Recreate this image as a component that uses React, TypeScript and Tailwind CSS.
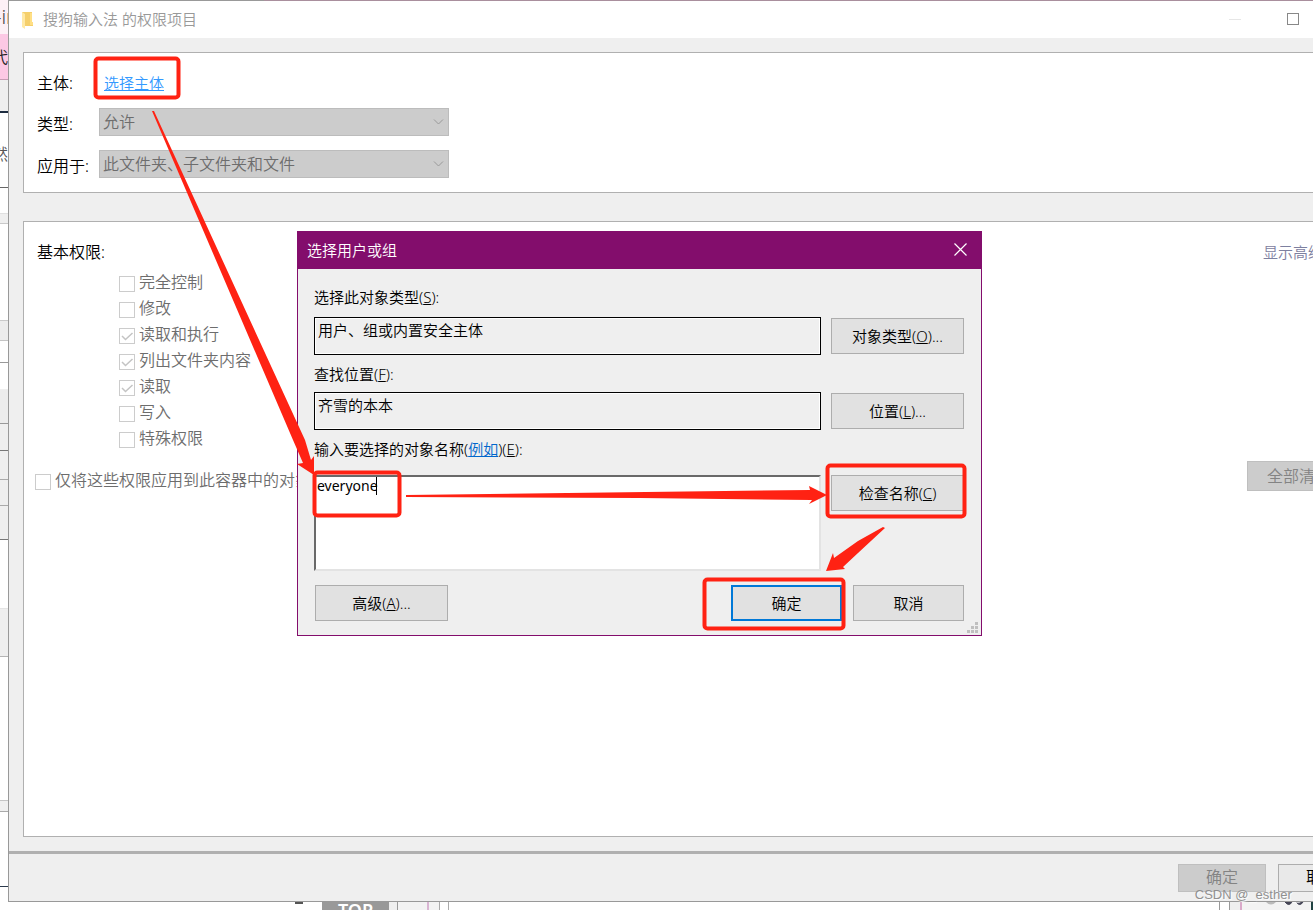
import { ReactNode } from "react";

const basicPermissions = [
  { label: "完全控制", checked: false },
  { label: "修改", checked: false },
  { label: "读取和执行", checked: true },
  { label: "列出文件夹内容", checked: true },
  { label: "读取", checked: true },
  { label: "写入", checked: false },
  { label: "特殊权限", checked: false },
];

// slices of the page that stays visible left of the window
const edgeRows = [
  "h-[26px] bg-white border-[#e0e0e0]",
  "h-[10px] bg-[#efefef] border-[#c9c9c9]",
  "h-[97px] bg-white border-[#c9c9c9]",
  "h-[20px] bg-[#ececec] border-[#c4c4c4]",
  "h-[22px] bg-white border-[#999]",
  "h-[27px] bg-white border-[#efefef]",
  "h-[34px] bg-[#ececec] border-[#999]",
  "h-[27px] bg-[#efefef] border-[#777]",
  "h-[29px] bg-[#efefef] border-[#aaa]",
  "h-[26px] bg-[#efefef] border-[#aaa]",
  "h-[34px] bg-[#efefef] border-[#777]",
  "h-[69px] bg-white border-[#e4e4e4]",
  "h-[48px] bg-[#efefef] border-[#b5b5b5]",
  "h-[144px] bg-white border-[#c4c4c4]",
  "h-[11px] bg-[#efefef] border-[#aaa]",
  "h-[75px] bg-white border-[#2c3a4c]",
];

function BackgroundEdge() {
  return (
    <div className="w-2 shrink-0 overflow-hidden bg-white whitespace-nowrap" aria-hidden="true">
      <div className="flex h-[34px] items-center bg-[#fdf0f6] text-[20px] text-[#444]">
        <span className="-ml-[5px]">-in</span>
      </div>
      <div className="flex h-[46px] items-center border-b border-[#c79cb4] bg-[#fcc8e4] text-base text-[#222]">
        <span className="-ml-2">代</span>
      </div>
      <div className="h-[33px] border-b-2 border-[#1d2c40] bg-[#efefef]" />
      <div className="flex h-[75px] items-center border-b border-[#666] bg-white pt-2 text-base text-[#555]">
        <span className="-ml-2">然</span>
      </div>
      {edgeRows.map((row) => (
        <div key={row} className={`border-b ${row}`} />
      ))}
    </div>
  );
}

function BackgroundFooter() {
  return (
    <div className="flex h-2 shrink-0 justify-between overflow-hidden bg-white" aria-hidden="true">
      <div className="flex">
        <div className="ml-[295px] h-[2px] w-2 bg-[#555]" />
        <div className="ml-[19px] w-[67px] bg-[#999] text-center text-[18px] leading-4 font-semibold text-white">TOP</div>
        <div className="w-[9px] border-r border-[#999] bg-[#efefef]" />
        <div className="w-[31px] border-r-2 border-[#d9b5d3] bg-[#f3f3f3]" />
        <div className="w-[11px] border-r border-[#aaa] bg-[#f3f3f3]" />
        <div className="w-[9px] border-r border-[#aaa]" />
      </div>
      <div className="flex">
        <div className="w-[11px] border-x border-[#999]" />
        <div className="w-[12px] border-r-2 border-[#d9a9c9] bg-[#efefef]" />
        <div className="w-[22px] bg-[#f3f3f3]" />
        <svg className="h-2 w-[49px] bg-[#f3f3f3]" viewBox="0 0 49 8">
          <path d="M2 0h10q-5 5-10 0" fill="#bbb" />
          <path d="M21 0q4 5 7 0M32 0q4 5 7 0" fill="#445" stroke="#445" />
          <path d="M48 0v8" stroke="#244" strokeWidth="2" />
        </svg>
      </div>
    </div>
  );
}

function TitleBar() {
  return (
    <header className="bg-white">
      <div className="flex h-px">
        <div className="w-[255px] bg-[#999]" />
        <div className="flex-1 bg-[#a98f9d]" />
      </div>
      <div className="flex h-[37px] items-center pl-3">
        <svg className="h-[18px] w-[13px]" viewBox="0 0 13 18">
          <path d="M1 1h10v10h1v4H4z" fill="#f5cf6b" />
          <path d="M1 1l3 2v15l-3-2z" fill="#ffe9a6" />
          <path d="M9 2h2v9h1v3H9z" fill="#ffdf85" />
        </svg>
        <h1 className="ml-[9px] flex-1 text-[15px] text-[#999]">搜狗输入法 的权限项目</h1>
        <button type="button" aria-label="最小化" className="mr-[46px] flex h-3 w-3 items-center" disabled>
          <span className="h-px w-full bg-[#e6e6e6]" />
        </button>
        <button type="button" aria-label="最大化" className="mr-[14px] mb-[2px] h-3 w-3 border border-[#888]" />
      </div>
    </header>
  );
}

function DisabledSelect({ id, value }: { id: string; value: string }) {
  return (
    <div className="relative">
      <select
        id={id}
        disabled
        className="block h-7 w-full appearance-none border border-[#bcbcbc] bg-[#ccc] px-[3px] text-base leading-6 text-[#6d6d6d] opacity-100"
      >
        <option>{value}</option>
      </select>
      <svg className="pointer-events-none absolute top-[11px] right-[5px] h-[6px] w-[11px]" viewBox="0 0 11 6" fill="none" stroke="#999">
        <path d="M1 .5l4.500 4.500L10 .5" />
      </svg>
    </div>
  );
}

function Check({ label, checked = false }: { label: string; checked?: boolean }) {
  return (
    <label className="flex h-[26px] items-start gap-1 text-base leading-6 whitespace-nowrap text-[#6d6d6d]">
      <span className="relative mt-[6px] h-4 w-4 shrink-0">
        <input type="checkbox" disabled defaultChecked={checked} className="block h-4 w-4 appearance-none border border-[#ccc] bg-white" />
        {checked && (
          <svg className="absolute inset-0 h-4 w-4" viewBox="0 0 16 16" fill="none" stroke="#c4c4c4" strokeWidth="1.500">
            <path d="M3 8l3.500 3.500L13.500 5" />
          </svg>
        )}
      </span>
      {label}
    </label>
  );
}

function DialogButton({ children, className }: { children: ReactNode; className: string }) {
  return (
    <button type="button" className={`h-9 bg-[#e1e1e1] text-[15px] text-black ${className}`}>
      {children}
    </button>
  );
}

function ReadOnlyField({ id, value }: { id: string; value: string }) {
  return (
    <textarea
      id={id}
      readOnly
      rows={1}
      defaultValue={value}
      className="block h-[38px] min-w-0 flex-1 resize-none overflow-hidden border border-black bg-[#efefef] px-[3px] leading-6 shadow-[inset_0_0_0_1px_white] outline-none"
    />
  );
}

function SelectUsersDialog() {
  return (
    <div
      role="dialog"
      aria-labelledby="dialog-title"
      className="absolute top-[231px] left-[297px] w-[685px] border border-[#830d6c] bg-[#efefef] text-[15px] leading-6 text-black"
    >
      <div className="flex h-[37px] items-center justify-between bg-[#830d6c] pr-[14px] pb-[2px] pl-[9px] text-white">
        <h2 id="dialog-title">选择用户或组</h2>
        <button type="button" aria-label="关闭">
          <svg className="h-[13px] w-[13px]" viewBox="0 0 13 13" stroke="white" strokeWidth="1.200" fill="none">
            <path d="M.5.5l12 12M12.500.5l-12 12" />
          </svg>
        </button>
      </div>
      <form className="relative pt-4 pr-[17px] pb-[14px] pl-4">
        <label htmlFor="object-type" className="block">选择此对象类型(<u>S</u>):</label>
        <div className="mt-2 flex items-center gap-[10px]">
          <ReadOnlyField id="object-type" value="用户、组或内置安全主体" />
          <DialogButton className="w-[133px] border border-[#adadad]">对象类型(<u>O</u>)...</DialogButton>
        </div>
        <label htmlFor="location" className="mt-[7px] block">查找位置(<u>F</u>):</label>
        <div className="mt-[6px] flex items-center gap-[10px]">
          <ReadOnlyField id="location" value="齐雪的本本" />
          <DialogButton className="w-[133px] border border-[#adadad]">位置(<u>L</u>)...</DialogButton>
        </div>
        <div className="mt-[7px]">
          <label htmlFor="object-names">输入要选择的对象名称(</label>
          <a href="#examples" className="text-[#0066cc] underline">例如</a>)(<u>E</u>):
        </div>
        <div className="mt-[14px] flex items-start gap-[10px]">
          <div className="relative min-w-0 flex-1">
            <textarea
              id="object-names"
              defaultValue="everyone"
              className="block h-24 w-full resize-none border-2 border-t-[#696969] border-r-[#e3e3e3] border-b-[#e3e3e3] border-l-[#696969] bg-white px-px text-[14px] leading-[18px] font-normal outline-none"
            />
            <span className="absolute top-[2px] left-[62px] h-[18px] w-px bg-black" />
          </div>
          <DialogButton className="w-[133px] border border-[#adadad]">检查名称(<u>C</u>)</DialogButton>
        </div>
        <div className="mt-[14px] flex gap-[11px] pl-px">
          <DialogButton className="mr-auto w-[133px] border border-[#adadad]">高级(<u>A</u>)...</DialogButton>
          <DialogButton className="w-[111px] border-2 border-[#0078d7]">确定</DialogButton>
          <DialogButton className="w-[111px] border border-[#adadad]">取消</DialogButton>
        </div>
        <svg className="absolute right-[3px] bottom-[2px] h-[11px] w-[11px]" viewBox="0 0 11 11" fill="#bfbfbf">
          <path d="M8 0h3v3H8zM4 4h3v3H4zM8 4h3v3H8zM0 8h3v3H0zM4 8h3v3H4zM8 8h3v3H8z" />
        </svg>
      </form>
    </div>
  );
}

function Annotations() {
  return (
    <svg className="pointer-events-none absolute top-0 left-0 h-[910px] w-[1313px]" viewBox="0 0 1313 910" fill="#ff2213" aria-hidden="true">
      <g fill="none" stroke="#ff2213" strokeWidth="4">
        <rect x="95.500" y="58.500" width="83" height="39" rx="3" />
        <rect x="314.500" y="472.500" width="85" height="43" rx="3" />
        <rect x="827.500" y="465.500" width="137" height="51" rx="3" />
        <rect x="704.500" y="579.500" width="139" height="49" rx="3" />
      </g>
      <path d="M152 111h2L305 440l6 20 3-4v19l-17-11 6-1-10-23z" />
      <path d="M406 495L810 490l-1-4 18 9-18 9 3-4-172-2-234-1z" />
      <path d="M883 527l2 1-27 25-15 14 2 2-19 2 7-18 1 5 24-17z" />
    </svg>
  );
}

export default function App() {
  return (
    <div className="relative flex h-screen flex-col overflow-hidden bg-white font-['Noto_Sans','Noto_Sans_CJK_SC',sans-serif] font-[350]">
      <div className="flex min-h-0 flex-1">
        <BackgroundEdge />
        <main className="flex min-w-0 flex-1 flex-col overflow-hidden border-b border-l border-[#999] bg-[#efefef]">
          <TitleBar />
          <section className="mt-[14px] ml-[14px] border border-r-0 border-[#b0b0b0] bg-white pb-[14px] pl-[13px] text-base leading-6">
            <div className="mt-4 mb-[11px] grid h-7 grid-cols-[62px_350px] items-center">
              <span>主体:</span>
              <a href="#principal" className="justify-self-start pl-[5px] text-[15px] text-[#3399ff]">
                <span className="underline">选择主体</span>
              </a>
            </div>
            <div className="mb-[14px] grid h-7 grid-cols-[62px_350px] items-center">
              <label htmlFor="type" className="pt-1">类型:</label>
              <DisabledSelect id="type" value="允许" />
            </div>
            <div className="grid h-7 grid-cols-[62px_350px] items-center">
              <label htmlFor="applies-to" className="pt-1">应用于:</label>
              <DisabledSelect id="applies-to" value="此文件夹、子文件夹和文件" />
            </div>
          </section>

          <section className="mt-7 mb-[14px] ml-[14px] min-h-0 flex-1 border border-r-0 border-[#b0b0b0] bg-white">
            <div className="flex justify-between pt-[18px] pl-[13px] leading-6">
              <h2 className="text-base">基本权限:</h2>
              <a href="#advanced" className="w-[50px] overflow-hidden text-[15px] whitespace-nowrap text-[#7d80a0]">显示高级权限</a>
            </div>
            <div className="mt-[6px] pl-[95px]">
              {basicPermissions.map((permission) => (
                <Check key={permission.label} {...permission} />
              ))}
            </div>
            <div className="mt-[9px] flex items-start justify-between pl-[11px]">
              <div className="pt-[7px]">
                <Check label="仅将这些权限应用到此容器中的对象和/或容器" />
              </div>
              <button type="button" disabled className="h-[30px] w-[66px] overflow-hidden border border-r-0 border-[#bfbfbf] bg-[#ccc] pl-[19px] text-left text-base whitespace-nowrap text-[#838383]">
                全部清除
              </button>
            </div>
          </section>

          <footer className="flex h-[50px] items-start justify-end gap-3 border-t-3 border-[#b0b0b0] pt-[10px]">
            <button type="button" disabled className="h-7 w-[88px] border border-[#bfbfbf] bg-[#ccc] pb-[2px] text-base text-[#838383]">确定</button>
            <button type="button" className="h-7 w-[35px] overflow-hidden border border-r-0 border-[#adadad] bg-[#e9e9e9] pb-[2px] pl-[27px] text-left text-base whitespace-nowrap">取消</button>
          </footer>
        </main>
      </div>
      <BackgroundFooter />
      <SelectUsersDialog />
      <Annotations />
      <p className="absolute right-[14px] bottom-[5px] font-['Liberation_Sans',sans-serif] text-[13px] leading-5 font-normal text-[#909090] [text-shadow:1px_1px_1px_white]">
        CSDN @_esther_
      </p>
    </div>
  );
}
